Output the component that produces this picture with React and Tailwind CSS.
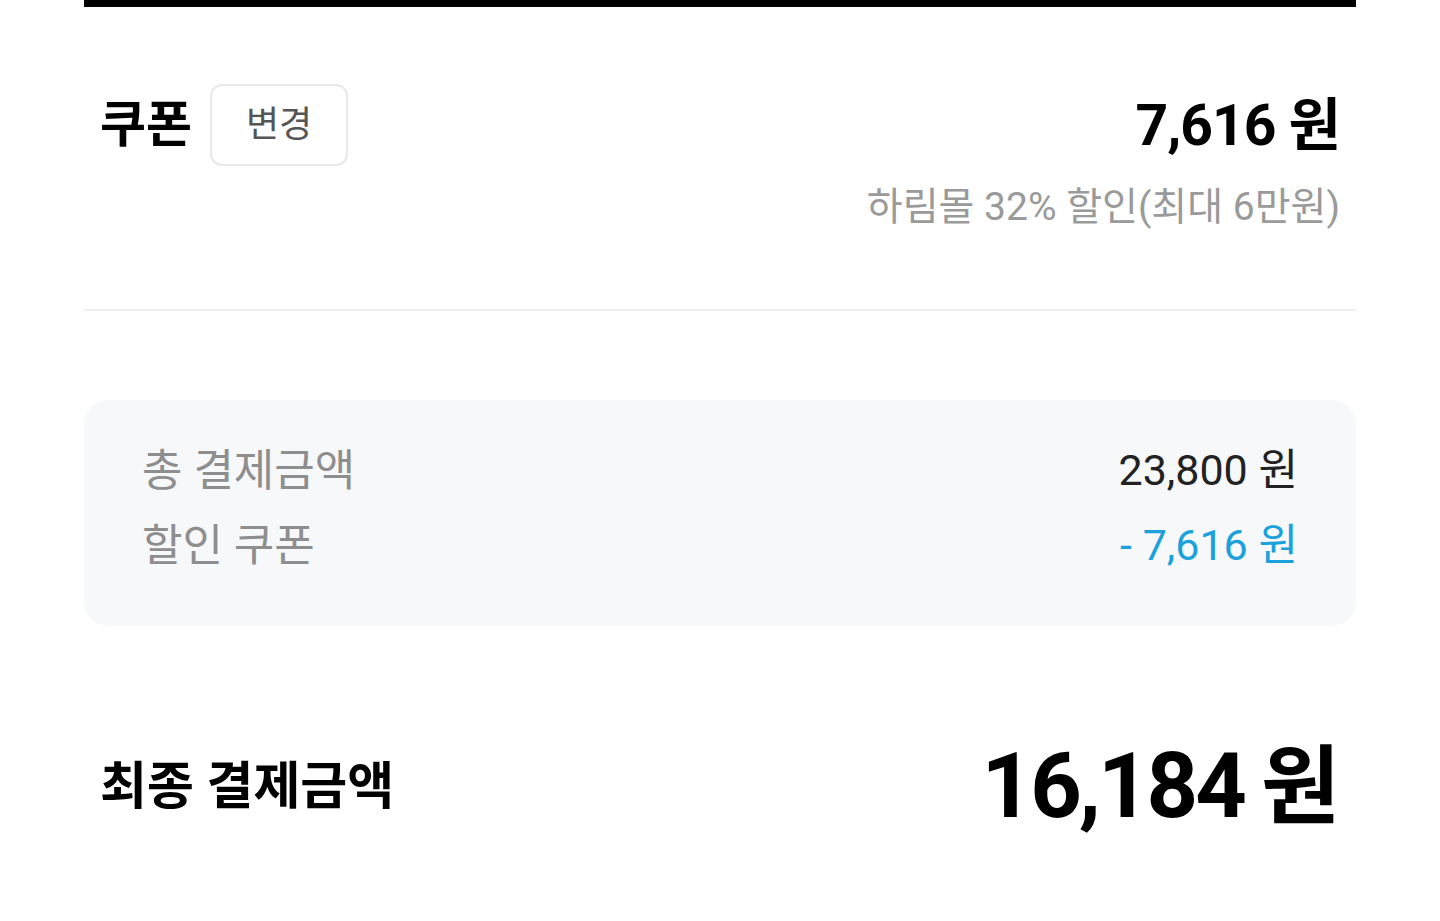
import React from "react";

const font = {
  fontFamily: 'Roboto, "Noto Sans CJK KR", sans-serif',
};

export default function App() {
  return (
    <div className="min-h-[921px] bg-white" style={font}>
      <div className="mx-[84px]">
        <div className="h-[7px] bg-black" />

        {/* Coupon */}
        <div className="pt-[77px] pb-[82px] px-4 border-b-2 border-[#eeeeee]">
          <div className="flex items-center justify-between">
            <div className="flex items-center gap-[18px]">
              <span className="text-[50px] font-bold leading-none text-black">쿠폰</span>
              <button className="w-[138px] h-[82px] rounded-xl border-2 border-[#e8e8e8] text-[36px] text-[#555]">
                변경
              </button>
            </div>
            <span className="text-[57px] font-bold leading-none tracking-[-1px] text-black">7,616 원</span>
          </div>
          <div className="mt-[22px] text-right text-[39px] leading-none text-[#9a9a9a]">
            하림몰 32% 할인(최대 6만원)
          </div>
        </div>

        {/* Summary box */}
        <div className="mt-[89px] rounded-[24px] bg-[#f7f8fa] px-[58px] pt-[33px] pb-[43px]">
          <div className="flex items-center justify-between h-[75px]">
            <span className="text-[44px] text-[#8e8e8e]">총 결제금액</span>
            <span className="text-[43px] text-[#222]">23,800 원</span>
          </div>
          <div className="flex items-center justify-between h-[75px]">
            <span className="text-[44px] text-[#8e8e8e]">할인 쿠폰</span>
            <span className="text-[43px] text-[#1ba1dc]">- 7,616 원</span>
          </div>
        </div>

        {/* Final */}
        <div className="mt-[116px] px-4 flex items-center justify-between">
          <span className="text-[51px] font-bold text-black">최종 결제금액</span>
          <div className="flex items-baseline font-bold leading-none text-black">
            <span className="text-[90px] tracking-[-3px]">16,184</span>
            <span className="ml-[17px] text-[86px]">원</span>
          </div>
        </div>
      </div>
    </div>
  );
}
